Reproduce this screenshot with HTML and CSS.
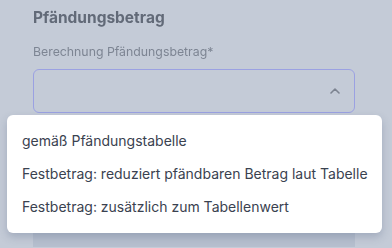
FILE: index.html
```html
<!DOCTYPE html>
<html lang="de">
<head>
<meta charset="utf-8">
<link rel="stylesheet" href="styles.css">
</head>
<body>
<div class="page">
  <div class="form">
    <h2 class="title">Pfändungsbetrag</h2>
    <label class="label">Berechnung Pfändungsbetrag*</label>
    <div class="select">
      <svg class="chevron" width="10" height="6" viewBox="0 0 10 6"><path d="M1 5 L5 1 L9 5" fill="none" stroke="#7c8390" stroke-width="1.6" stroke-linecap="round" stroke-linejoin="round"/></svg>
    </div>
    <div class="below"></div>
  </div>
</div>
<ul class="menu">
  <li>gemäß Pfändungstabelle</li>
  <li>Festbetrag: reduziert pfändbaren Betrag laut Tabelle</li>
  <li>Festbetrag: zusätzlich zum Tabellenwert</li>
</ul>
</body>
</html>
```
FILE: styles.css
```css
html, body {
  margin: 0;
  padding: 0;
  width: 392px;
  height: 248px;
  overflow: hidden;
  background: #c4cbd7;
  font-family: Inter, Roboto, "Liberation Sans", sans-serif;
}
.page {
  filter: blur(0.5px);
}
.form {
  padding: 8px 37px 0 33px;
  display: flex;
  flex-direction: column;
}
.title {
  margin: 0;
  font-size: 15.5px;
  font-weight: 700;
  line-height: 20px;
  color: #626a78;
}
.label {
  margin-top: 17px;
  font-size: 12.3px;
  line-height: 14px;
  color: #7d8593;
}
.select {
  margin-top: 10px;
  height: 42px;
  border: 1.5px solid #9ba1e2;
  border-radius: 6px;
  display: flex;
  align-items: center;
  justify-content: flex-end;
  padding-right: 14px;
}
.chevron {
  display: block;
}
.below {
  margin-top: 118px;
  height: 16px;
  background: #b6bfce;
}
.menu {
  position: absolute;
  left: 7px;
  top: 115px;
  width: 375px;
  height: 118px;
  margin: 0;
  padding: 9px 0 0 0;
  box-sizing: border-box;
  list-style: none;
  background: #ffffff;
  border-radius: 6px;
  box-shadow: 0 4px 8px rgba(60, 75, 110, 0.25);
}
.menu li {
  padding: 0 15px;
  height: 33px;
  line-height: 33px;
  font-size: 14px;
  color: #3a4250;
  white-space: nowrap;
}
```
